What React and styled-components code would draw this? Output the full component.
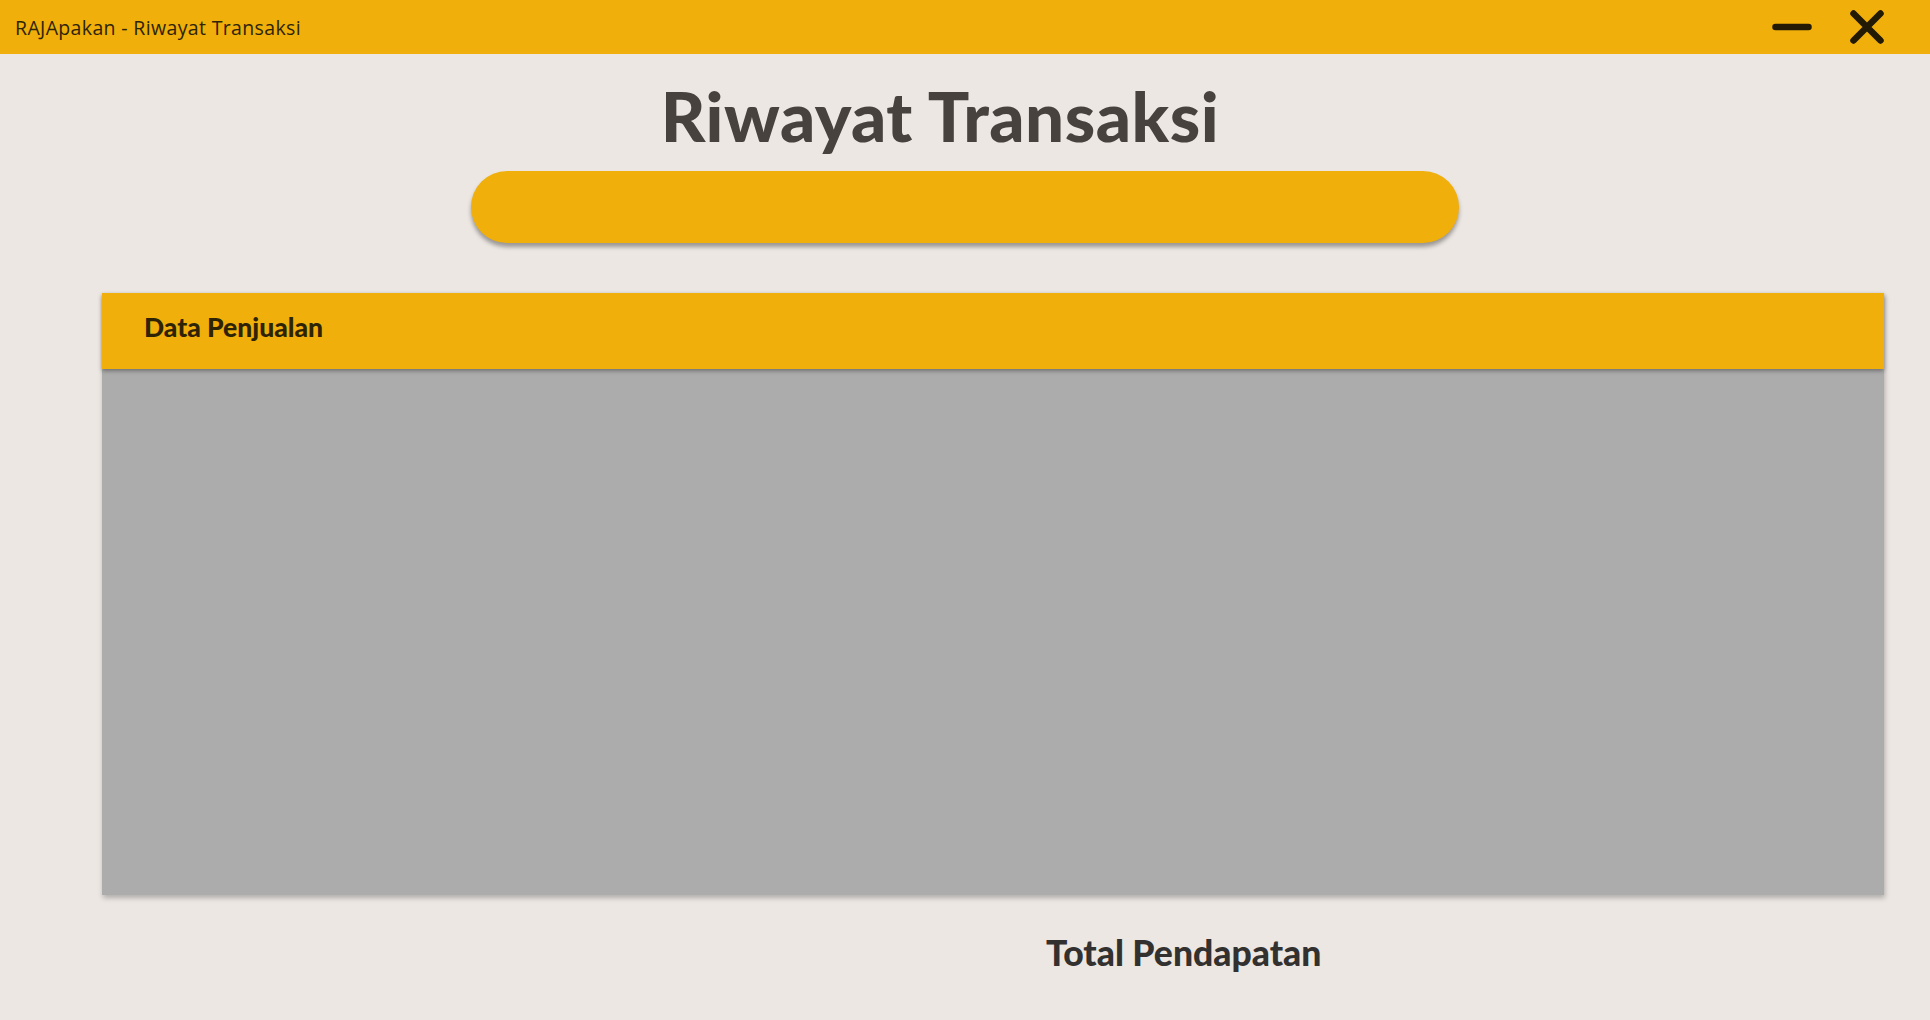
import React from "react";
import styled, { createGlobalStyle } from "styled-components";

const Global = createGlobalStyle`
  html, body { margin: 0; padding: 0; }
  body {
    background: #ece7e3;
    font-family: "Lato", "Open Sans", sans-serif;
    width: 1930px;
    height: 1020px;
    overflow: hidden;
  }
`;

const Page = styled.div`
  display: flex;
  flex-direction: column;
  width: 1930px;
  height: 1020px;
  background: #ece7e3;
`;

const TitleBar = styled.header`
  height: 54px;
  background: #f0af0a;
  display: flex;
  align-items: center;
  justify-content: space-between;
  padding: 0 46px 0 15px;
  box-sizing: border-box;
`;

const WindowTitle = styled.span`
  font-family: "Open Sans", sans-serif;
  font-size: 19.5px;
  color: #2e2408;
  letter-spacing: 0.35px;
  margin-top: 1px;
`;

const WindowControls = styled.div`
  display: flex;
  align-items: center;
  gap: 38px;
`;

const ControlButton = styled.button`
  background: none;
  border: 0;
  padding: 0;
  display: flex;
  cursor: pointer;
`;

const Main = styled.main`
  display: flex;
  flex-direction: column;
  align-items: flex-start;
`;

const Heading = styled.h1`
  align-self: center;
  margin: 22px 50px 0 0;
  font-family: "Lato", sans-serif;
  font-weight: 900;
  font-size: 69px;
  line-height: 80px;
  color: #47423e;
  letter-spacing: 0.5px;
`;

const SearchBar = styled.div`
  align-self: center;
  margin-top: 15px;
  width: 988px;
  height: 72px;
  border-radius: 36px;
  background: #f0af0a;
  box-shadow: 0 4px 4px rgba(0, 0, 0, 0.35);
`;

const TableCard = styled.section`
  margin: 50px 0 0 102px;
  width: 1782px;
  height: 602px;
  display: flex;
  flex-direction: column;
  background: #acacac;
  box-shadow: 1px 3px 5px rgba(0, 0, 0, 0.25);
`;

const TableHeader = styled.div`
  height: 76px;
  box-sizing: border-box;
  background: #f0af0a;
  display: flex;
  align-items: center;
  padding: 0 0 8px 42px;
  box-shadow: 0 2px 4px rgba(0, 0, 0, 0.35);
  position: relative;
  z-index: 1;
`;

const TableTitle = styled.h2`
  margin: 0;
  font-family: "Lato", sans-serif;
  font-weight: 900;
  font-size: 26.5px;
  color: #2e2405;
`;

const TableBody = styled.div`
  flex: 1;
`;

const Footer = styled.div`
  display: flex;
  margin: 36px 0 0 1046px;
`;

const TotalLabel = styled.h3`
  margin: 0;
  font-family: "Lato", sans-serif;
  font-weight: 900;
  font-size: 35.5px;
  color: #333130;
`;

export default function App() {
  return (
    <Page>
      <Global />
      <TitleBar>
        <WindowTitle>RAJApakan - Riwayat Transaksi</WindowTitle>
        <WindowControls>
          <ControlButton aria-label="minimize">
            <svg width="40" height="8" viewBox="0 0 40 8">
              <line x1="3.5" y1="4" x2="36.5" y2="4" stroke="#231a05" strokeWidth="6.5" strokeLinecap="round" />
            </svg>
          </ControlButton>
          <ControlButton aria-label="close">
            <svg width="34" height="34" viewBox="0 0 34 34">
              <path d="M3.5 3.5 L30.5 30.5 M30.5 3.5 L3.5 30.5" stroke="#231a05" strokeWidth="6.5" strokeLinecap="round" />
            </svg>
          </ControlButton>
        </WindowControls>
      </TitleBar>
      <Main>
        <Heading>Riwayat Transaksi</Heading>
        <SearchBar />
        <TableCard>
          <TableHeader>
            <TableTitle>Data Penjualan</TableTitle>
          </TableHeader>
          <TableBody />
        </TableCard>
        <Footer>
          <TotalLabel>Total Pendapatan</TotalLabel>
        </Footer>
      </Main>
    </Page>
  );
}
